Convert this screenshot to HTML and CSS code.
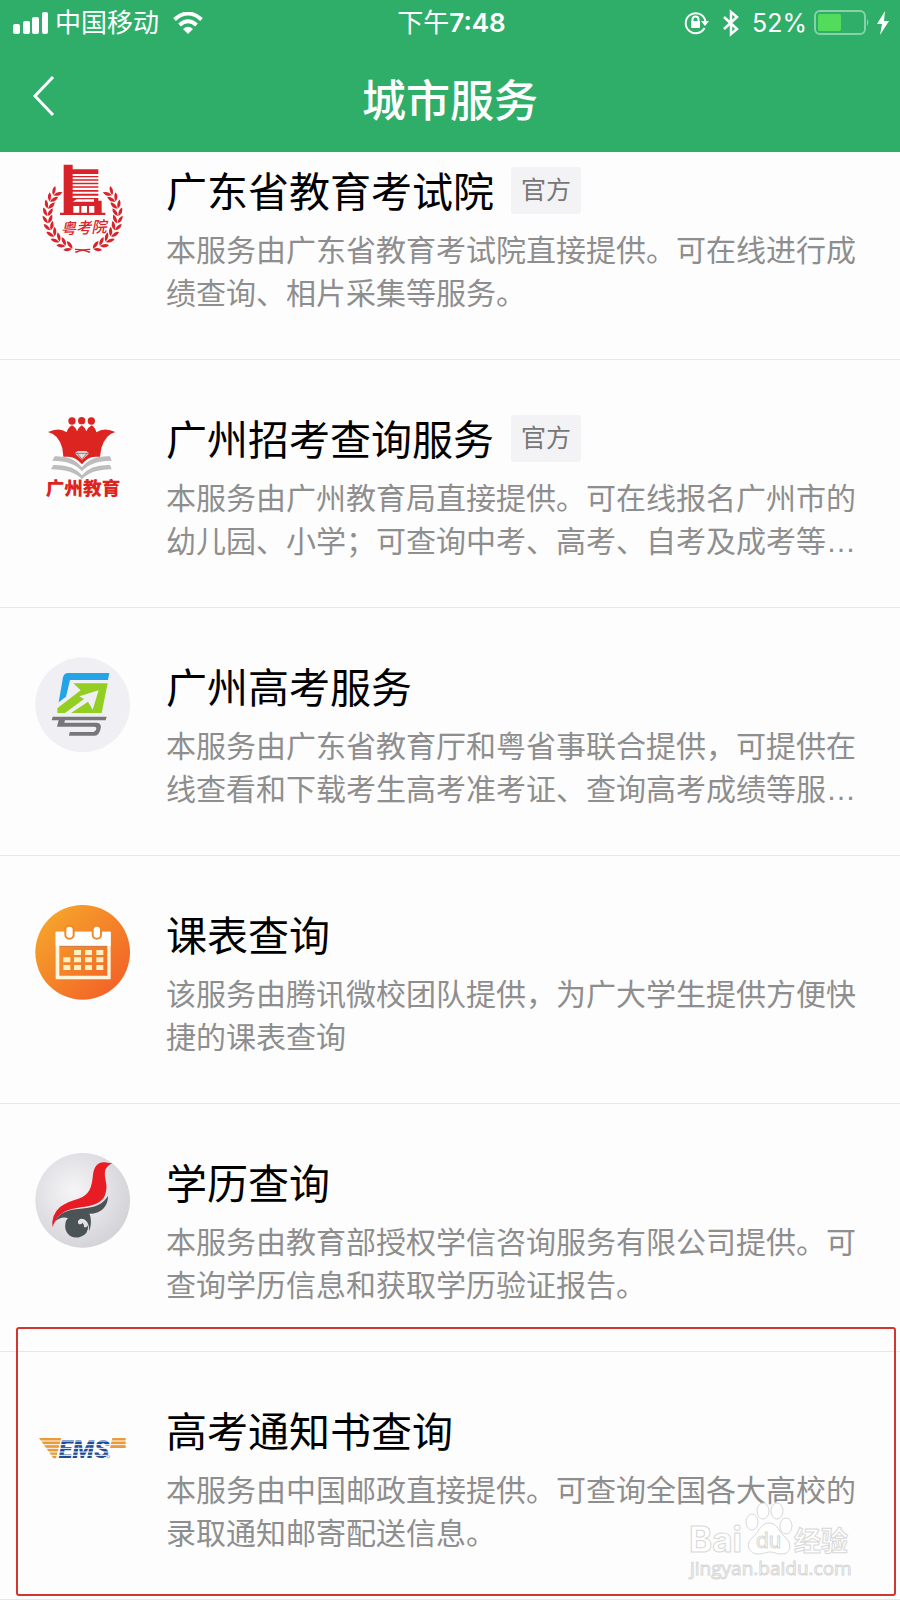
FILE: index.html
```html
<!DOCTYPE html>
<html lang="zh-CN">
<head>
	<meta charset="UTF-8">
	<meta name="viewport" content="width=device-width, initial-scale=1">
	<title>城市服务</title>
	<link rel="stylesheet" href="styles.css">
</head>
<body>

<!-- ******************** HEADER ******************** -->
<header class="top">
	<div class="status">
		<div class="status-left">
			<svg width="36" height="24" viewBox="0 0 36 24" fill="#fff">
				<rect x="0" y="13" width="7" height="10" rx="2"/>
				<rect x="10" y="10" width="7" height="13" rx="2"/>
				<rect x="19" y="6" width="7" height="17" rx="2"/>
				<rect x="29" y="1" width="6" height="22" rx="2"/>
			</svg>
			<span class="carrier">中国移动</span>
			<svg class="wifi" width="30" height="22" viewBox="0 0 30 22" fill="none" stroke="#fff" stroke-width="4">
				<path d="M1.500 7.500Q15-4.500 28.500 7.500"/>
				<path d="M6.500 13Q15 5.500 23.500 13"/>
				<path d="M10 17Q15 12.500 20 17L15 22z" fill="#fff" stroke="none"/>
			</svg>
		</div>
		<div class="time">下午<b>7:48</b></div>
		<div class="status-right">
			<svg width="26" height="24" viewBox="0 0 26 24" fill="none" stroke="#fff" stroke-width="2">
				<path d="M20.500 17A10 10 0 1 1 21 8.500V11"/>
				<path d="M17 10H25L21 15z" fill="#fff" stroke="none"/>
				<rect x="7" y="10" width="9" height="7" rx="1" fill="#fff" stroke="none"/>
				<path d="M8.500 11V8.500a3 3 0 0 1 6 0V11"/>
			</svg>
			<svg class="bt" width="16" height="28" viewBox="0 0 16 28" fill="none" stroke="#fff" stroke-width="2.500">
				<path d="M1 8L14 20L8 25V3L14 8L1 20"/>
			</svg>
			<span class="percent">52%</span>
			<svg width="56" height="26" viewBox="0 0 56 26">
				<rect x="1" y="1" width="50" height="23" rx="5" fill="none" stroke="#86d3a7" stroke-width="2"/>
				<rect x="4" y="4" width="23" height="17" rx="2" fill="#53dc5c"/>
				<path d="M53 9q3 3.500 0 7z" fill="#86d3a7"/>
			</svg>
			<svg class="bolt" width="14" height="24" viewBox="0 0 14 24"><path d="M9 0L1 13H6L4 24L13 10H8z" fill="#fff"/></svg>
		</div>
	</div>
	<div class="nav">
		<button class="back" type="button" aria-label="返回">
			<svg width="22" height="40" viewBox="0 0 22 40" fill="none" stroke="#fff" stroke-width="3"><path d="M20 1L2 20L20 39"/></svg>
		</button>
		<h1>城市服务</h1>
	</div>
</header>

<!-- ******************** SERVICE LIST ******************** -->
<ul class="list">
	<li class="item">
		<svg class="icon" viewBox="45 33 285 285" fill="#d8232a">
			<defs>
				<g id="leaf">
					<path d="M82 209Q66 203 68 185Q81 190 82 209z"/>
					<path d="M83 209Q82 192 97 184Q100 202 83 209z"/>
				</g>
				<g id="branch">
					<use href="#leaf" transform="rotate(42 187 195)"/>
					<use href="#leaf" transform="rotate(30 187 195)"/>
					<use href="#leaf" transform="rotate(18 187 195)"/>
					<use href="#leaf" transform="rotate(6 187 195)"/>
					<use href="#leaf" transform="rotate(-6 187 195)"/>
					<use href="#leaf" transform="rotate(-18 187 195)"/>
					<use href="#leaf" transform="rotate(-30 187 195)"/>
					<use href="#leaf" transform="rotate(-42 187 195)"/>
					<use href="#leaf" transform="rotate(-54 187 195)"/>
					<use href="#leaf" transform="rotate(-66 187 195)"/>
					<path d="M165 296Q190 295 212 305L208 309Q190 300 165 300z"/>
				</g>
			</defs>
			<use href="#branch"/>
			<use href="#branch" transform="translate(376 0) scale(-1 1)"/>
			<path d="M131 44H158V58H235V72H158V78H235V82H158V88H235V92H158V98H235V103H158V109H235V113H158V120H235V125H158V131H235V137H158V144H235V152H245V188H256V195H120V188H131z"/>
			<path d="M160 168H178V188H160zM184 168H201V188H184zM207 168H223V188H207zM158 155L170 148H222V155z" fill="#fff"/>
			<text class="seal" x="122" y="250" transform="rotate(-3 187 235)">粤考院</text>
		</svg>
		<div class="info">
			<h2>广东省教育考试院<span class="tag">官方</span></h2>
			<p>本服务由广东省教育考试院直接提供。可在线进行成绩查询、相片采集等服务。</p>
		</div>
	</li>
	<li class="item">
		<svg class="icon" viewBox="45 27 285 285" fill="#dc2420">
			<circle cx="156" cy="63" r="11"/><circle cx="185" cy="62" r="11"/><circle cx="214" cy="63" r="11"/>
			<path d="M84 96Q118 80 140 97Q144 82 156 76Q168 82 171 94Q176 82 185 76Q195 82 199 94Q204 82 215 76Q226 83 229 97Q253 80 286 96Q256 103 244 145L240 170H226Q202 171 186 193Q168 171 144 170H130L127 145Q116 103 84 96z"/>
			<path d="M164 160L173 153H198L208 160L186 180z" fill="#ddd"/>
			<path d="M171 160L186 178L201 160M164 160H208" fill="none" stroke="#a33" stroke-width="2"/>
			<path d="M104 169Q160 167 186 202Q212 167 270 169L275 182Q212 182 186 214Q160 182 97 182zM100 195Q160 193 186 226Q212 193 270 195L275 208Q212 208 186 238Q160 208 93 208z" fill="#bdbdbf"/>
			<text class="school" x="77" y="285">广州教育</text>
		</svg>
		<div class="info">
			<h2>广州招考查询服务<span class="tag">官方</span></h2>
			<p>本服务由广州教育局直接提供。可在线报名广州市的幼儿园、小学；可查询中考、高考、自考及成考等…</p>
		</div>
	</li>
	<li class="item">
		<svg class="icon" viewBox="45 36 285 285">
			<circle cx="188" cy="179" r="142" fill="#f0eff3"/>
			<path d="M145 84H268L264 105H150L138 155L116 172L129 97Q132 84 145 84z" fill="#22a4e6"/>
			<path d="M160 115H263L245 204H112V190L182 136z" fill="#93cf22"/>
			<path d="M134 205L192 162L178 154L236 136L218 194L204 170L152 205z" fill="#f0eff3"/>
			<path d="M98 215H260L257 226H135L133 233H230Q247 234 241 254Q237 272 222 272H147L149 261H218Q227 260 229 251Q230 245 222 245H111L116 226H95z" fill="#77777a"/>
		</svg>
		<div class="info">
			<h2>广州高考服务</h2>
			<p>本服务由广东省教育厅和粤省事联合提供，可提供在线查看和下载考生高考准考证、查询高考成绩等服…</p>
		</div>
	</li>
	<li class="item">
		<svg class="icon" viewBox="45 45 285 285">
			<defs>
				<linearGradient id="orange" x1="0" y1="0" x2="1" y2="1"><stop offset=".1" stop-color="#f6a52b"/><stop offset=".9" stop-color="#f26127"/></linearGradient>
			</defs>
			<circle cx="188" cy="187" r="142" fill="url(#orange)"/>
			<path d="M107 125H272V268H107zM118 171V257H262V171z" fill="#fff5dc" fill-rule="evenodd"/>
			<path d="M107 125H272V168H107z" fill="#fff"/>
			<path d="M118 169H262" stroke="#c96528" stroke-width="3"/>
			<g fill="#fff" stroke="#ef8a2a" stroke-width="6">
				<rect x="136" y="107" width="25" height="39" rx="12"/>
				<rect x="218" y="107" width="25" height="39" rx="12"/>
			</g>
			<path d="M162 180h21v15h-21zM195 180h21v15h-21zM229 180h21v15h-21zM130 202h21v15h-21zM162 202h21v15h-21zM195 202h21v15h-21zM229 202h21v15h-21zM130 225h21v15h-21zM162 225h21v15h-21zM195 225h21v15h-21zM229 225h21v15h-21z" fill="#fff0c4"/>
		</svg>
		<div class="info">
			<h2>课表查询</h2>
			<p>该服务由腾讯微校团队提供，为广大学生提供方便快捷的课表查询</p>
		</div>
	</li>
	<li class="item">
		<svg class="icon" viewBox="45 39 285 285">
			<defs>
				<radialGradient id="silver" cx=".4" cy=".4" r=".65"><stop offset="0" stop-color="#f5f5f7"/><stop offset="1" stop-color="#d3d2d7"/></radialGradient>
			</defs>
			<circle cx="188" cy="181" r="142" fill="url(#silver)"/>
			<path d="M98 262Q92 226 120 201Q142 185 175 176C208 164 215 145 219 104C222 76 238 64 255 67Q267 70 277 70Q261 77 256 90C250 110 264 132 258 154C253 186 228 195 196 200C150 205 112 213 98 262z" fill="#e81c24"/>
			<path d="M104 246C126 205 165 209 200 204C235 199 251 188 264 167C265 201 240 222 208 221C215 236 214 258 207 274C209 250 198 236 184 236C175 237 171 246 176 252Q184 255 188 248Q194 256 192 262Q202 263 204 254Q207 282 180 291C153 299 132 278 136 253Q137 240 144 234Q121 228 104 246z" fill="#4b5357"/>
		</svg>
		<div class="info">
			<h2>学历查询</h2>
			<p>本服务由教育部授权学信咨询服务有限公司提供。可查询学历信息和获取学历验证报告。</p>
		</div>
	</li>
	<li class="item marked">
		<svg class="icon" viewBox="105 273 285 285">
			<path d="M117 384H184L168 445H160z" fill="#eb9a3a"/>
			<path d="M337 384H377V414H330z" fill="#eb9a3a"/>
			<text class="ems" x="176" y="444">EMS</text>
			<path d="M115 393H380M115 404H380M115 415H330M115 426H330M115 436H330" stroke="#fff" stroke-width="3"/>
			<circle cx="325" cy="440" r="4" fill="none" stroke="#6d8dc0" stroke-width="2"/>
		</svg>
		<div class="info">
			<h2>高考通知书查询</h2>
			<p>本服务由中国邮政直接提供。可查询全国各大高校的录取通知邮寄配送信息。</p>
		</div>
		<svg class="watermark" width="170" height="85" viewBox="0 0 170 85">
			<g fill="#fff" stroke="#d8d8d8">
				<text class="wm-name" x="4" y="53">Bai</text>
				<text class="wm-cn" x="109" y="52">经验</text>
				<ellipse cx="78" cy="12" rx="6" ry="8"/>
				<ellipse cx="92" cy="12" rx="6" ry="8"/>
				<ellipse cx="67" cy="23" rx="6" ry="8"/>
				<ellipse cx="101" cy="27" rx="6" ry="8"/>
				<path d="M84 24C75 24 74 34 67 39C60 45 64 55 73 55C79 55 81 53 85 53C89 53 91 55 97 55C106 55 107 45 101 39C94 34 93 24 84 24z"/>
				<text class="wm-du" x="71" y="49">du</text>
				<text class="wm-url" x="5" y="76">jingyan.baidu.com</text>
			</g>
		</svg>
	</li>
</ul>

</body>
</html>
```
FILE: styles.css
```css
* { box-sizing: border-box; }
body { margin: 0; background-color: #fdfdfd; font-family: "Liberation Sans", "Noto Sans CJK SC", sans-serif; }
h1, h2, p, ul { margin: 0; padding: 0; font-weight: normal; }
svg { display: block; flex: none; }

/* header */
.top { background-color: #2fae6a; color: #fff; }
.status { display: grid; grid-template-columns: 1fr auto 1fr; align-items: center; height: 46px; padding: 0 10px 0 13px; font-family: Inter, "Noto Sans CJK SC", sans-serif; font-size: 26px; line-height: 46px; }
.status-left, .status-right { display: flex; align-items: center; }
.status-right { justify-content: flex-end; }
.carrier { margin-left: 6px; }
.wifi { margin-left: 14px; }
.time b { font-weight: 600; }
.bt { margin: 0 13px; }
.percent { margin-right: 7px; font-size: 25px; }
.bolt { margin-left: 6px; }
.nav { display: grid; grid-template-columns: 80px 1fr 80px; align-items: center; height: 106px; padding-top: 6px; }
.back { display: flex; justify-content: center; padding: 0 0 12px 8px; border: 0; background: none; cursor: pointer; }
.nav h1 { text-align: center; font-size: 44px; font-weight: 500; line-height: 60px; }

/* services */
.list { list-style: none; }
.item { display: flex; align-items: flex-start; gap: 36px; padding: 49px 28px 44px 35px; border-bottom: 1px solid #e6e6e6; }
.item:first-child { padding-top: 9px; }
.icon { width: 95px; height: 95px; }
.info { flex: 1; padding-top: 6px; }
.info h2 { display: flex; align-items: flex-start; height: 50px; margin-bottom: 12px; color: #000; font-size: 41px; line-height: 53px; }
.info p { color: #8e8e8e; font-size: 30px; line-height: 43px; }
.tag { margin-left: 17px; padding: 0 10px; border-radius: 4px; background-color: #f3f3f5; color: #777; font-size: 25px; line-height: 47px; }

/* logo lettering */
.seal { font-family: "Noto Sans CJK SC", sans-serif; font-size: 46px; font-style: italic; font-weight: 500; }
.school { font-family: "Noto Sans CJK SC", sans-serif; font-size: 56px; font-weight: 900; }
.ems { fill: #1d4d96; font-family: Roboto, sans-serif; font-size: 76px; font-weight: 900; font-style: italic; }

/* red frame round the last service */
.marked { position: relative; }
.marked::after { content: ""; position: absolute; top: -25px; right: 4px; bottom: 3px; left: 16px; border: 2px solid #d33530; border-radius: 3px; pointer-events: none; }
.watermark { position: absolute; right: 45px; bottom: 15px; }
.wm-name { font-family: Inter, sans-serif; font-size: 35px; font-weight: 700; }
.wm-cn { font-family: "Noto Sans CJK SC", sans-serif; font-size: 27px; font-weight: 700; }
.wm-du { font-family: Inter, sans-serif; font-size: 21px; }
.wm-url { font-family: "Open Sans", sans-serif; font-size: 19px; }
```
